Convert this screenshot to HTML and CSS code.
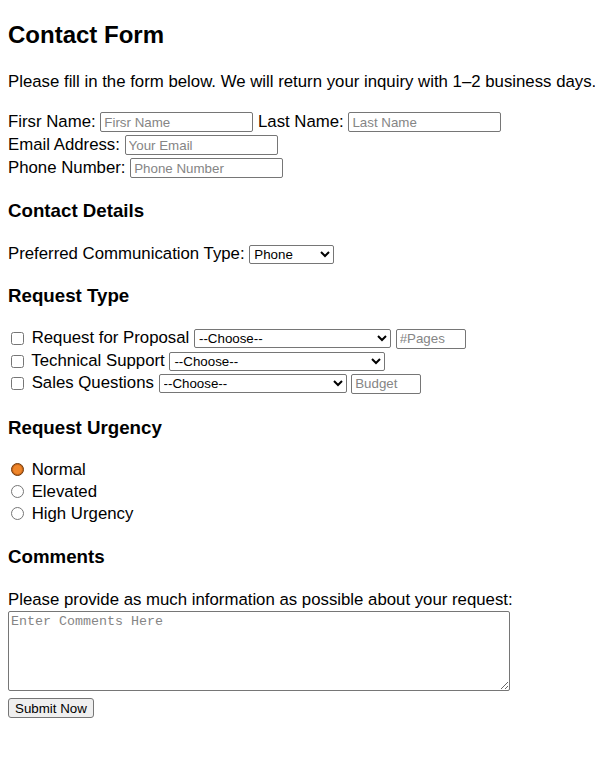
FILE: index.html
```html
<!DOCTYPE html>
<html lang="en">
<head>
<meta charset="utf-8">
<title>Contact Form</title>
<link rel="stylesheet" href="styles.css">
</head>
<body>
<h2 class="title">Contact Form</h2>
<p class="intro">Please fill in the form below. We will return your inquiry with 1–2 business days.</p>
<form class="form">
  <div class="row">Firsr Name: <input class="field" type="text" placeholder="Firsr Name"> Last Name: <input class="field" type="text" placeholder="Last Name"></div>
  <div class="row">Email Address: <input class="field" type="text" placeholder="Your Email"></div>
  <div class="row">Phone Number: <input class="field" type="text" placeholder="Phone Number"></div>

  <h3 class="section">Contact Details</h3>
  <div class="row">Preferred Communication Type: <select class="select sel-phone"><option>Phone</option><option>Email</option></select></div>

  <h3 class="section section-tight">Request Type</h3>
  <div class="check-row"><input class="check" type="checkbox"> Request for Proposal <select class="select sel-rfp"><option>--Choose--</option></select> <input class="small" type="text" placeholder="#Pages"></div>
  <div class="check-row"><input class="check" type="checkbox"> Technical Support <select class="select sel-tech"><option>--Choose--</option></select></div>
  <div class="check-row"><input class="check" type="checkbox"> Sales Questions <select class="select sel-sales"><option>--Choose--</option></select> <input class="small" type="text" placeholder="Budget"></div>

  <h3 class="section section-wide">Request Urgency</h3>
  <div class="radio-row"><input class="radio" type="radio" name="urgency" checked> Normal</div>
  <div class="radio-row"><input class="radio" type="radio" name="urgency"> Elevated</div>
  <div class="radio-row"><input class="radio" type="radio" name="urgency"> High Urgency</div>

  <h3 class="section">Comments</h3>
  <div class="prompt">Please provide as much information as possible about your request:</div>
  <textarea class="comments" placeholder="Enter Comments Here"></textarea>
  <div class="actions"><button class="submit" type="button">Submit Now</button></div>
</form>
</body>
</html>
```

FILE: styles.css
```css
html { background: #fff; }
body {
  margin: 0 8px;
  font-family: "Liberation Sans", Arial, sans-serif;
  font-size: 16.8px;
  color: #000;
}
.title {
  margin: 21px 0 0;
  font-size: 24px;
  line-height: 28px;
  font-weight: bold;
}
.intro {
  margin: 24px 0 0;
  line-height: 18px;
  white-space: nowrap;
}
.form { margin: 18.5px 0 0; }
.row {
  height: 23px;
  line-height: 23px;
  white-space: nowrap;
}
.section {
  margin: 21.5px 0 20px;
  font-size: 18.72px;
  line-height: 22px;
  font-weight: bold;
}
.section-tight { margin-top: 20px; }
.section-wide { margin-top: 22px; }
.check-row {
  height: 22.5px;
  line-height: 22.5px;
  white-space: nowrap;
}
.radio-row {
  height: 22px;
  line-height: 22px;
  white-space: nowrap;
}
.field, .small {
  box-sizing: border-box;
  width: 153px;
  height: 20px;
  padding: 1px 3px;
  border: 1px solid #767676;
  border-radius: 2px;
  font-family: "Liberation Sans", Arial, sans-serif;
  font-size: 13.33px;
  vertical-align: middle;
  background: #fff;
}
.small { width: 70px; }
.field::placeholder, .small::placeholder { color: #858585; }
.select {
  box-sizing: border-box;
  height: 19px;
  padding: 0;
  border: 1px solid #767676;
  border-radius: 2px;
  background-color: #fff;
  font-family: "Liberation Sans", Arial, sans-serif;
  font-size: 13.33px;
  color: #000;
  vertical-align: middle;
}
.sel-phone { width: 85px; }
.sel-rfp { width: 197px; }
.sel-tech { width: 216px; }
.sel-sales { width: 188px; }
.check {
  width: 13px;
  height: 13px;
  margin: 0 3px 0 3px;
  vertical-align: middle;
}
.radio {
  appearance: none;
  box-sizing: border-box;
  width: 13px;
  height: 13px;
  margin: 0 3px 0 3px;
  border: 1px solid #767676;
  border-radius: 50%;
  background: #fff;
  vertical-align: middle;
  position: relative;
  top: -1px;
}
.radio:checked {
  border: 1px solid #6e3a0c;
  background: #ef862a;
  box-shadow: inset 0 0 0 1px #c9651a;
}
.prompt {
  margin-top: 22.5px;
  line-height: 18px;
}
.comments {
  display: block;
  box-sizing: border-box;
  width: 502px;
  height: 80px;
  margin: 2px 0 0;
  padding: 2px;
  border: 1px solid #767676;
  border-radius: 2px;
  font-family: "Liberation Mono", "Courier New", monospace;
  font-size: 13.33px;
}
.comments::placeholder { color: #858585; }
.actions { margin-top: 7px; }
.submit {
  box-sizing: border-box;
  height: 20px;
  padding: 0 6px;
  border: 1px solid #767676;
  border-radius: 3px;
  background: #efefef;
  font-family: "Liberation Sans", Arial, sans-serif;
  font-size: 13.33px;
  color: #000;
}
```
